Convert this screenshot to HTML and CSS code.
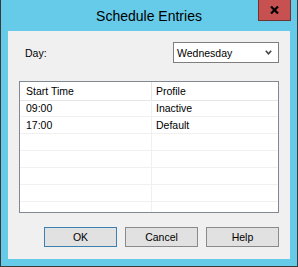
FILE: index.html
```html
<!DOCTYPE html>
<html lang="en">
<head>
    <meta charset="UTF-8">
    <meta name="viewport" content="width=device-width, initial-scale=1.0">
    <title>Schedule Entries</title>
    <link rel="stylesheet" href="styles.css">
</head>
<body>
    <div class="window">
        <div class="titlebar">
            <span class="title">Schedule Entries</span>
            <button class="close" aria-label="Close">
                <svg width="9" height="8" viewBox="0 0 9 8">
                    <path d="M1 0.5 L8 7.5 M8 0.5 L1 7.5" stroke="#000" stroke-width="2.2" fill="none"/>
                </svg>
            </button>
        </div>
        <div class="client">
            <div class="day-row">
                <label for="day">Day:</label>
                <div class="combo" id="day">
                    <span>Wednesday</span>
                    <svg width="7" height="5" viewBox="0 0 7 5">
                        <polyline points="0.8,0.8 3.5,3.8 6.2,0.8" stroke="#444" stroke-width="1.6" fill="none"/>
                    </svg>
                </div>
            </div>
            <div class="list">
                <div class="row head">
                    <div class="cell">Start Time</div>
                    <div class="cell">Profile</div>
                </div>
                <div class="row">
                    <div class="cell">09:00</div>
                    <div class="cell">Inactive</div>
                </div>
                <div class="row">
                    <div class="cell">17:00</div>
                    <div class="cell">Default</div>
                </div>
                <div class="row"><div class="cell"></div><div class="cell"></div></div>
                <div class="row"><div class="cell"></div><div class="cell"></div></div>
                <div class="row"><div class="cell"></div><div class="cell"></div></div>
                <div class="row"><div class="cell"></div><div class="cell"></div></div>
                <div class="row filler"><div class="cell"></div><div class="cell"></div></div>
            </div>
            <div class="buttons">
                <button class="btn default">OK</button>
                <button class="btn">Cancel</button>
                <button class="btn">Help</button>
            </div>
        </div>
    </div>
</body>
</html>
```

FILE: styles.css
```css
body {
    margin: 0;
    font-family: "Segoe UI", "Liberation Sans", Arial, sans-serif;
    font-size: 10.5px;
    color: #000;
}
.window {
    position: relative;
    box-sizing: border-box;
    width: 298px;
    height: 267px;
    background: #65cbe9;
    border: 1px solid #3a3a3a;
    border-top: none;
    padding: 0 7px 7px;
    display: flex;
    flex-direction: column;
}
.titlebar {
    height: 31px;
    display: flex;
    justify-content: center;
    align-items: center;
}
.title {
    font-size: 14px;
    margin-top: 1px;
}
.close {
    position: absolute;
    top: 0;
    right: 6px;
    box-sizing: border-box;
    width: 33px;
    height: 21px;
    padding: 0;
    background: #c75050;
    border: 1px solid #6e3434;
    border-top: none;
    display: flex;
    justify-content: center;
    align-items: center;
}
.client {
    flex: 1;
    background: #f0f0f0;
    padding: 11px 11px 12px;
    display: flex;
    flex-direction: column;
}
.day-row {
    display: flex;
    justify-content: space-between;
    align-items: center;
    height: 21px;
    margin-bottom: 18px;
}
.day-row label {
    padding-left: 6px;
}
.combo {
    box-sizing: border-box;
    width: 106px;
    height: 21px;
    background: #fff;
    border: 1px solid #7e7e7e;
    padding: 0 6px 0 3px;
    display: flex;
    justify-content: space-between;
    align-items: center;
}
.list {
    box-sizing: border-box;
    height: 132px;
    border: 1px solid #828790;
    background: #fff;
    display: flex;
    flex-direction: column;
    margin-bottom: 14px;
}
.row {
    display: grid;
    grid-template-columns: 132px 1fr;
    height: 17px;
    line-height: 16px;
}
.row.head {
    height: 18px;
    line-height: 18px;
}
.row.filler {
    flex: 1;
}
.cell {
    border-bottom: 1px solid #f0f0f0;
    padding-left: 4px;
    white-space: nowrap;
}
.cell:first-child {
    border-right: 1px solid #f0f0f0;
    padding-left: 6px;
}
.head .cell {
    border-bottom-color: #e5e5e5;
}
.head .cell:first-child {
    border-right-color: #e5e5e5;
}
.filler .cell {
    border-bottom: none;
}
.buttons {
    display: flex;
    justify-content: flex-end;
    gap: 8px;
}
.btn {
    box-sizing: border-box;
    width: 73px;
    height: 20px;
    padding: 0;
    font: inherit;
    color: #000;
    background: #e1e1e1;
    border: 1px solid #8a8a8a;
}
.btn.default {
    border-color: #3c7fb1;
}
```
